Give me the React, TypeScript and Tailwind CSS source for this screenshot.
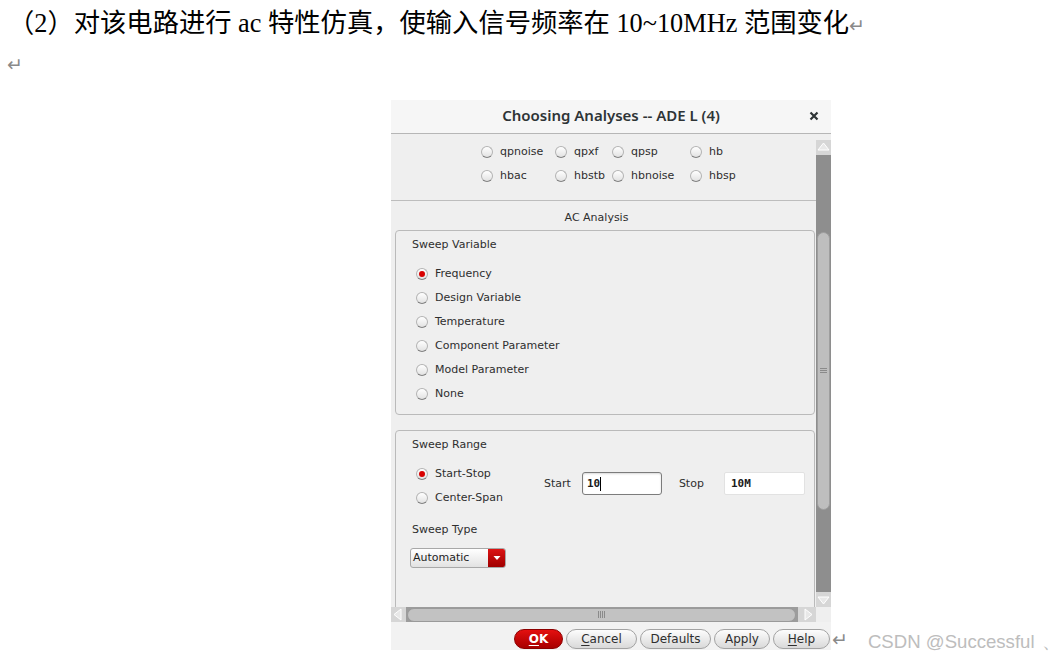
import React from "react";

const ui = "font-['DejaVu_Sans',sans-serif]";
const mono = "font-['DejaVu_Sans_Mono',monospace]";

function Radio({ checked = false }: { checked?: boolean }) {
  return (
    <span className="flex h-[12px] w-[12px] shrink-0 items-center justify-center rounded-full border border-[#b4b4b4] border-b-[#808080] bg-linear-to-b from-[#ffffff] to-[#e2e2e2]">
      {checked && <span className="h-[6px] w-[6px] rounded-full bg-[#d80000]" />}
    </span>
  );
}

function RadioRow({ label, checked }: { label: string; checked?: boolean }) {
  return (
    <div className="flex h-[24px] items-center gap-[7px]">
      <Radio checked={checked} />
      <span>{label}</span>
    </div>
  );
}

function Arrow({ dir }: { dir: "up" | "down" | "left" | "right" }) {
  const pts = {
    up: "2,10 7.5,3 13,10",
    down: "2,5 7.5,12 13,5",
    left: "10,2 3,7.5 10,13",
    right: "5,2 12,7.5 5,13",
  }[dir];
  return (
    <svg width="15" height="15" viewBox="0 0 15 15">
      <polygon points={pts} fill="#e8e8e8" stroke="#ffffff" strokeWidth="1" />
    </svg>
  );
}

function Btn({ children, w, primary }: { children: React.ReactNode; w: string; primary?: boolean }) {
  return (
    <div
      className={
        primary
          ? `flex h-[20px] ${w} items-center justify-center rounded-full border border-[#8c0000] bg-linear-to-b from-[#e41010] to-[#a80000] text-[12px] font-bold text-white`
          : `flex h-[20px] ${w} items-center justify-center rounded-full border border-[#a2a2a2] bg-linear-to-b from-[#fdfdfd] to-[#d9d9d9] text-[12px] text-[#2e2e2e]`
      }
    >
      {children}
    </div>
  );
}

export default function App() {
  return (
    <div className="h-[661px] w-[1064px] overflow-hidden bg-white">
      {/* document text */}
      <div className="h-[40px] whitespace-nowrap pl-[8px] pt-[8px] text-[26.3px] leading-[32px] text-black font-['Liberation_Serif','Noto_Sans_CJK_SC',serif]">
        （2）对该电路进行 ac 特性仿真，使输入信号频率在 10~10MHz 范围变化
        <span className="text-[19px] text-[#8a8a8a] font-['DejaVu_Sans',sans-serif]">↵</span>
      </div>
      <div className="mt-[8px] h-[32px] pl-[7px] text-[19px] leading-[32px] text-[#8a8a8a] font-['DejaVu_Sans',sans-serif]">↵</div>

      <div className="mt-[20px] flex items-end">
        {/* dialog */}
        <div className={`ml-[391px] w-[440px] ${ui} text-[11px] leading-[16px] text-[#2e2e2e]`}>
          {/* title bar */}
          <div className="relative flex h-[34px] items-center justify-center border-b border-[#b6b6b6] bg-[#f6f6f6] pb-[4px]">
            <span className="text-[15px] font-semibold text-[#2e3436] font-['Noto_Sans',sans-serif]">
              Choosing Analyses -- ADE L (4)
            </span>
            <svg className="absolute right-[11px] top-[10px]" width="12" height="12" viewBox="0 0 12 12">
              <path d="M2.5 2.5 L9.5 9.5 M9.5 2.5 L2.5 9.5" stroke="#2e3436" strokeWidth="2.2" />
            </svg>
          </div>

          {/* body */}
          <div className="flex h-[473px] bg-[#efefef]">
            <div className="h-[473px] w-[425px] overflow-hidden pt-[6px]">
              <div className="grid grid-cols-[74px_57px_78px_60px] pl-[90px]">
                <RadioRow label="qpnoise" />
                <RadioRow label="qpxf" />
                <RadioRow label="qpsp" />
                <RadioRow label="hb" />
                <RadioRow label="hbac" />
                <RadioRow label="hbstb" />
                <RadioRow label="hbnoise" />
                <RadioRow label="hbsp" />
              </div>

              <div className="mt-[12px] border-t border-[#bdbdbd] pt-[9px] pr-[14px] text-center">AC Analysis</div>

              {/* sweep variable */}
              <div className="ml-[4px] mt-[4px] w-[420px] rounded-[4px] border border-[#bababa] pb-[8px] pt-[6px]">
                <div className="pl-[16px]">Sweep Variable</div>
                <div className="mt-[9px] pl-[20px]">
                  <RadioRow label="Frequency" checked />
                  <RadioRow label="Design Variable" />
                  <RadioRow label="Temperature" />
                  <RadioRow label="Component Parameter" />
                  <RadioRow label="Model Parameter" />
                  <RadioRow label="None" />
                </div>
              </div>

              {/* sweep range */}
              <div className="ml-[4px] mt-[15px] h-[200px] w-[420px] rounded-[4px] border border-[#bababa] pt-[6px]">
                <div className="pl-[16px]">Sweep Range</div>
                <div className="mt-[9px] flex">
                  <div className="w-[148px] pl-[20px]">
                    <RadioRow label="Start-Stop" checked />
                    <RadioRow label="Center-Span" />
                  </div>
                  <div className="mt-[10px] flex h-[23px] items-center">
                    <span>Start</span>
                    <div className="ml-[11px] flex h-[23px] w-[80px] items-center rounded-[3px] border border-[#7c7c7c] bg-white pl-[4px] shadow-[inset_0_1px_2px_rgba(0,0,0,0.15)]">
                      <span className={`${mono} text-[11px] font-bold text-[#1a1a1a]`}>10</span>
                      <span className="h-[14px] w-px bg-black" />
                    </div>
                    <span className="ml-[17px]">Stop</span>
                    <div className="ml-[20px] flex h-[23px] w-[81px] items-center rounded-[2px] border border-[#e2e2e2] bg-white pl-[6px]">
                      <span className={`${mono} text-[11px] font-bold text-[#1a1a1a]`}>10M</span>
                    </div>
                  </div>
                </div>
                <div className="mt-[12px] pl-[16px]">Sweep Type</div>
                <div className="ml-[14px] mt-[10px] flex h-[20px] w-[96px] overflow-hidden rounded-[3px] border border-[#a8a8a8] bg-linear-to-b from-[#ffffff] to-[#e2e2e2]">
                  <span className="flex flex-1 items-center pl-[2px] text-[11px] text-[#1e1e1e]">Automatic</span>
                  <span className="flex w-[17px] items-center justify-center bg-linear-to-b from-[#dc1414] to-[#a00000]">
                    <svg width="8" height="6" viewBox="0 0 8 6">
                      <polygon points="0.5,1 7.5,1 4,5" fill="#ffffff" />
                    </svg>
                  </span>
                </div>
              </div>
            </div>

            {/* vertical scrollbar */}
            <div className="mt-[6px] flex h-[467px] w-[15px] flex-col">
              <div className="flex h-[15px] items-center justify-center bg-[#d6d6d6]">
                <Arrow dir="up" />
              </div>
              <div className="flex flex-1 flex-col bg-[#8e8e8e] pt-[77px]">
                <div className="mx-[1px] flex h-[278px] items-center justify-center rounded-full border border-[#9e9e9e] bg-[#bebebe]">
                  <svg width="7" height="6" viewBox="0 0 7 6">
                    <path d="M0 0.5 H7 M0 2.5 H7 M0 4.5 H7" stroke="#8a8a8a" strokeWidth="1" />
                  </svg>
                </div>
              </div>
              <div className="flex h-[15px] items-center justify-center bg-[#d6d6d6]">
                <Arrow dir="down" />
              </div>
            </div>
          </div>

          {/* horizontal scrollbar */}
          <div className="flex h-[15px] bg-[#efefef]">
            <div className="flex w-[15px] items-center justify-center bg-[#d6d6d6]">
              <Arrow dir="left" />
            </div>
            <div className="flex w-[392px] items-center bg-[#9c9c9c] px-[1px]">
              <div className="flex h-[14px] w-[389px] items-center justify-center rounded-full border border-[#9a9a9a] bg-[#c2c2c2]">
                <svg width="7" height="7" viewBox="0 0 7 7">
                  <path d="M0.5 0 V7 M2.5 0 V7 M4.5 0 V7 M6.5 0 V7" stroke="#8a8a8a" strokeWidth="1" />
                </svg>
              </div>
            </div>
            <div className="flex w-[18px] items-center justify-center bg-[#d6d6d6]">
              <Arrow dir="right" />
            </div>
          </div>

          {/* buttons */}
          <div className="flex h-[28px] items-start justify-end gap-[3px] bg-[#f2f2f2] pr-[1px] pt-[7px]">
            <Btn w="w-[49px]" primary>
              <span className="underline underline-offset-2">O</span>K
            </Btn>
            <Btn w="w-[71px]">
              <span className="underline underline-offset-2">C</span>ancel
            </Btn>
            <Btn w="w-[71px]">Defaults</Btn>
            <Btn w="w-[56px]">Apply</Btn>
            <Btn w="w-[57px]">
              <span className="underline underline-offset-2">H</span>elp
            </Btn>
          </div>
        </div>

        <span className="mb-[0px] ml-[1px] text-[19px] leading-[22px] text-[#8a8a8a] font-['DejaVu_Sans',sans-serif]">↵</span>
        <span className="mb-[-4px] ml-[20px] whitespace-nowrap text-[18.6px] leading-[24px] text-[#bdbdbd] font-['Liberation_Sans',sans-serif]">
          CSDN @Successful <span className="ml-[2px]">、</span>
        </span>
      </div>
    </div>
  );
}
